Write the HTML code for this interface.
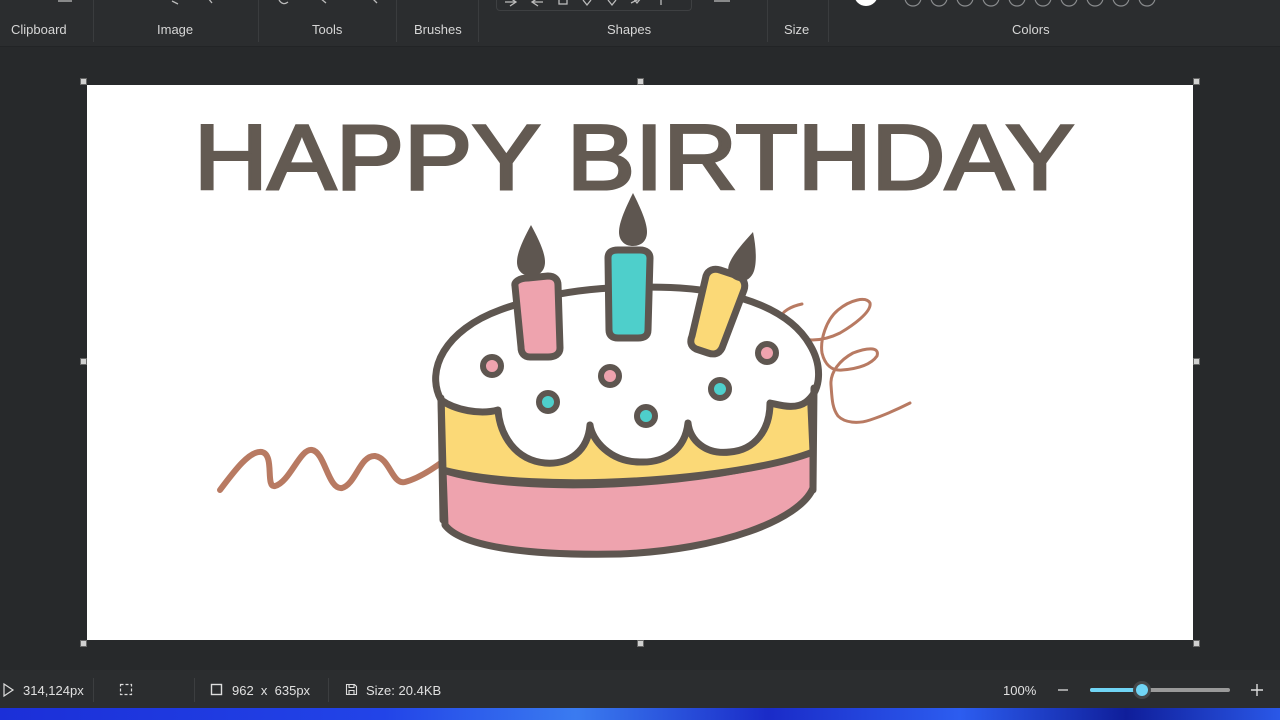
<!DOCTYPE html>
<html><head><meta charset="utf-8">
<style>
html,body{margin:0;padding:0;width:1280px;height:720px;overflow:hidden;background:#27292b;font-family:"Liberation Sans",sans-serif;}
.tb{position:absolute;left:0;top:0;width:1280px;height:46px;background:#2b2d2f;border-bottom:1px solid #222426;}
.lbl{position:absolute;top:22px;font-size:13px;color:#d6d6d6;}
.sep{position:absolute;top:0;width:1px;height:42px;background:#3a3c3e;}
.sb{position:absolute;left:0;top:670px;width:1280px;height:38px;background:#2b2d2f;color:#e0e0e0;font-size:13px;}
.sb span{position:absolute;top:13px;}
.ssep{position:absolute;top:8px;width:1px;height:24px;background:#3c3e40;}
.blue{position:absolute;left:0;top:708px;width:1280px;height:12px;background:linear-gradient(90deg,#1b2fd8 0%,#2244e8 30%,#3a7bf0 45%,#1a2bc8 60%,#2c5df0 75%,#0f1e9a 88%,#2a58e8 100%);}
</style></head><body>
<div class="tb">
  <div class="lbl" style="left:11px">Clipboard</div>
  <div class="sep" style="left:93px"></div>
  <div class="lbl" style="left:157px">Image</div>
  <div class="sep" style="left:258px"></div>
  <div class="lbl" style="left:312px">Tools</div>
  <div class="sep" style="left:396px"></div>
  <div class="lbl" style="left:414px">Brushes</div>
  <div class="sep" style="left:478px"></div>
  <div class="lbl" style="left:607px">Shapes</div>
  <div class="sep" style="left:767px"></div>
  <div class="lbl" style="left:784px">Size</div>
  <div class="sep" style="left:828px"></div>
  <div class="lbl" style="left:1012px">Colors</div>
  <div style="position:absolute;left:496px;top:-4px;width:194px;height:14px;border:1px solid #3e4042;border-top:none;border-radius:0 0 4px 4px;"></div>
  <svg width="1280" height="14" style="position:absolute;left:0;top:0">
    <g fill="none" stroke="#bbb" stroke-width="1.3">
      <path d="M505 2 L515 2 M510 -2 L516 2 L510 6"/>
      <path d="M533 2 L543 2 M538 -2 L532 2 L538 6"/>
      <rect x="559" y="-4" width="8" height="8"/>
      <path d="M583 0 L587 5 L591 0"/>
      <path d="M608 0 L612 5 L616 0"/>
      <path d="M633 -2 L637 3 L641 -2 M631 3 L643 -3"/>
      <path d="M661 0 L661 5"/>
      <path d="M714 1 L730 1"/>
      <path d="M172 1 L178 4"/><path d="M208 -2 L212 3"/>
      <path d="M279 0 Q283 6 288 2"/><path d="M320 -2 L326 3"/><path d="M372 -2 L377 3"/>
      <path d="M58 1 L72 1"/>
    </g>
    <circle cx="866" cy="-6" r="12" fill="#fff"/>
    <g fill="none" stroke="#8a8c8e" stroke-width="1.2">
      <circle cx="913" cy="-2" r="8"/><circle cx="939" cy="-2" r="8"/><circle cx="965" cy="-2" r="8"/><circle cx="991" cy="-2" r="8"/><circle cx="1017" cy="-2" r="8"/><circle cx="1043" cy="-2" r="8"/><circle cx="1069" cy="-2" r="8"/><circle cx="1095" cy="-2" r="8"/><circle cx="1121" cy="-2" r="8"/><circle cx="1147" cy="-2" r="8"/>
    </g>
  </svg>
</div>

<svg width="1280" height="720" style="position:absolute;left:0;top:0">
  <rect x="87" y="85" width="1106" height="555" fill="#fff"/>
  <g fill="#d0d0d0" stroke="#666" stroke-width="1">
    <rect x="80.5" y="78.5" width="6" height="6"/><rect x="637.5" y="78.5" width="6" height="6"/><rect x="1193.5" y="78.5" width="6" height="6"/>
    <rect x="80.5" y="358.5" width="6" height="6"/><rect x="1193.5" y="358.5" width="6" height="6"/>
    <rect x="80.5" y="640.5" width="6" height="6"/><rect x="637.5" y="640.5" width="6" height="6"/><rect x="1193.5" y="640.5" width="6" height="6"/>
  </g>
  <text x="194" y="189" font-family="Liberation Sans, sans-serif" font-size="92" fill="#635a52" stroke="#635a52" stroke-width="3" textLength="880" lengthAdjust="spacingAndGlyphs">HAPPY BIRTHDAY</text>

  <path d="M220 490 C235 470 250 450 262 452 C275 455 265 488 275 486 C290 482 300 448 312 450 C325 452 328 490 342 488 C356 484 360 455 375 456 C390 458 392 485 405 482 C420 478 440 465 457 450" fill="none" stroke="#b87a62" stroke-width="6" stroke-linecap="round"/>
  <path d="M802 304 C792 306 780 312 782 318 C786 330 800 340 812 340 C822 340 832 337 840 333 C852 326 872 312 870 303 C866 296 850 300 838 310 C826 320 820 340 822 353 C825 365 832 371 842 370 C855 369 870 366 877 356 C880 346 866 348 853 353 C840 360 830 372 831 385 C832 398 832 408 838 416 C845 423 858 424 870 420 C885 415 900 408 910 403" fill="none" stroke="#b87a62" stroke-width="3" stroke-linecap="round"/>

  <g stroke="#5e5650" stroke-width="7" stroke-linejoin="round" stroke-linecap="round">
    <path d="M443 470 C520 495 700 488 813 452 L813 488 C800 520 720 550 620 554 C520 556 460 545 445 525 Z" fill="#eea3ae"/>
    <path d="M441 395 L810 385 L813 452 C740 480 540 495 443 470 Z" fill="#fbd977"/>
    <path d="M441 400 C425 370 445 330 500 310 C560 288 620 285 680 288 C740 292 790 310 810 345 C822 365 822 390 806 402 C795 410 780 405 770 403 C770 430 755 450 730 452 C705 455 690 440 688 423 C685 450 665 463 640 462 C610 462 592 440 590 425 C588 450 570 465 545 463 C515 460 500 435 498 410 C480 415 455 410 441 400 Z" fill="#fff"/>
    <path d="M441 398 L443 520" fill="none"/>
    <path d="M814 388 L813 490" fill="none"/>
    <path d="M515 286 C514 282 519 278 528 278 L548 276 C555 276 558 280 558 285 L560 348 C560 354 555 357 548 357 L530 357 C524 357 521 353 521 347 Z" fill="#eea3ae"/>
    <path d="M608 258 C608 252 612 250 618 250 L640 250 C646 250 650 253 650 258 L648 330 C648 336 644 338 638 338 L618 338 C612 338 609 335 609 330 Z" fill="#4ecfcb"/>
    <path d="M706 276 C708 270 714 268 720 270 L738 276 C744 279 746 284 744 290 L722 348 C719 354 714 355 708 353 L696 349 C690 346 690 341 692 336 Z" fill="#fbd977"/>
    <circle cx="492" cy="366" r="9" fill="#eea3ae" stroke-width="6"/>
    <circle cx="610" cy="376" r="9" fill="#eea3ae" stroke-width="6"/>
    <circle cx="767" cy="353" r="9" fill="#eea3ae" stroke-width="6"/>
    <circle cx="548" cy="402" r="9" fill="#4ecfcb" stroke-width="6"/>
    <circle cx="646" cy="416" r="9" fill="#4ecfcb" stroke-width="6"/>
    <circle cx="720" cy="389" r="9" fill="#4ecfcb" stroke-width="6"/>
  </g>
  <g fill="#5e5650">
    <path d="M531 225 C538 238 545 252 545 262 C545 271 539 276 531 276 C523 276 517 271 517 262 C517 252 524 238 531 225 Z"/>
    <path d="M633 193 C640 207 647 222 647 232 C647 241 641 246 633 246 C625 246 619 241 619 232 C619 222 626 207 633 193 Z"/>
    <path d="M753 232 C756 246 757 262 754 271 C751 280 743 283 736 280 C729 277 726 270 730 262 C734 253 744 242 753 232 Z"/>
  </g>
</svg>

<div class="sb">
  <svg width="1280" height="38" style="position:absolute;left:0;top:0">
    <path d="M4 14 L4 26 L13 20 Z" fill="none" stroke="#ddd" stroke-width="1.2"/>
    <rect x="120.5" y="14.5" width="11" height="10" fill="none" stroke="#ddd" stroke-width="1.2" stroke-dasharray="3 2"/>
    <rect x="211.5" y="14.5" width="10" height="10" fill="none" stroke="#ddd" stroke-width="1.4"/>
    <path d="M346.5 14.5 h8 l2 2 v8 h-10 z M349 14.5 v3 h5 v-3 M349 24.5 v-4 h5 v4" fill="none" stroke="#ddd" stroke-width="1.1"/>
    <path d="M1058 20 h10" stroke="#ddd" stroke-width="1.3"/>
    <rect x="1090" y="18" width="140" height="4" rx="2" fill="#9a9a9a"/>
    <rect x="1090" y="18" width="52" height="4" rx="2" fill="#70d4f5"/>
    <circle cx="1142" cy="20" r="9" fill="#454749"/>
    <circle cx="1142" cy="20" r="6" fill="#70d4f5"/>
    <path d="M1251 20 h12 M1257 14 v12" stroke="#ddd" stroke-width="1.4"/>
  </svg>
  <span style="left:23px">314,124px</span>
  <div class="ssep" style="left:93px"></div>
  <div class="ssep" style="left:194px"></div>
  <span style="left:232px">962 &nbsp;x &nbsp;635px</span>
  <div class="ssep" style="left:328px"></div>
  <span style="left:366px">Size: 20.4KB</span>
  <span style="left:1003px">100%</span>
</div>
<div class="blue"></div>
</body></html>
